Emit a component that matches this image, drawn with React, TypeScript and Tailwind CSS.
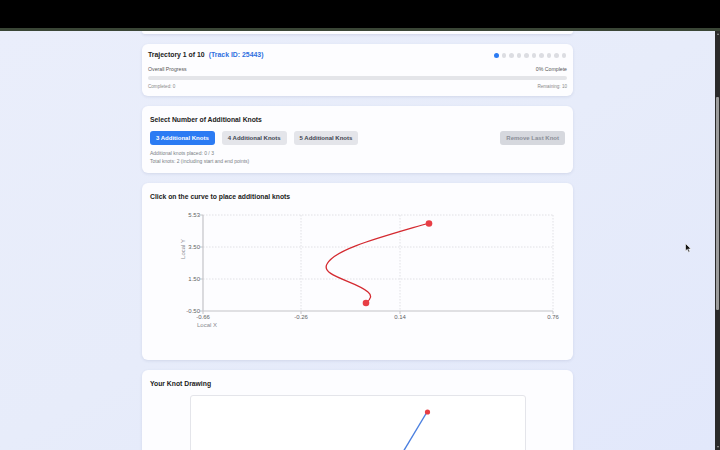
import React from 'react'

// Knot placement page — trajectory review step

const font = { fontFamily: '"Liberation Sans", Arial, sans-serif' }

function ProgressCard() {
  return (
    <div className="rounded-md bg-[#fdfdff] px-[6px] pt-[6px] pb-[6px] shadow-[0_1px_3px_rgba(60,70,120,0.12)]">
      <div className="flex h-[11px] items-center justify-between">
        <div className="flex items-center gap-[4px] text-[6.9px] font-bold leading-none">
          <span className="text-[#222]">Trajectory 1 of 10</span>
          <span className="text-[#2f6fe0]">(Track ID: 25443)</span>
        </div>
        <div className="mr-[1px] flex items-center gap-[3px]">
          {Array.from({ length: 10 }).map((_, i) => (
            <div
              key={i}
              className={i === 0 ? 'h-[5px] w-[5px] rounded-full bg-[#2b7bf3]' : 'h-[4.5px] w-[4.5px] rounded-full bg-[#dcdde2]'}
            />
          ))}
        </div>
      </div>
      <div className="mt-[4px] flex justify-between text-[5.2px] leading-[8px] text-[#555]">
        <span>Overall Progress</span>
        <span>0% Complete</span>
      </div>
      <div className="mt-[3px] h-[4px] rounded-full bg-[#e4e5e9]" />
      <div className="mt-[3px] flex justify-between text-[4.6px] leading-[7px] text-[#888]">
        <span>Completed: 0</span>
        <span>Remaining: 10</span>
      </div>
    </div>
  )
}

function KnotSelectCard() {
  const btn = 'h-[14px] rounded-[3px] px-[6px] text-[6px] font-bold leading-none flex items-center'
  return (
    <div className="rounded-md bg-[#fdfdff] px-[8px] pt-[9px] pb-[8px] shadow-[0_1px_3px_rgba(60,70,120,0.12)]">
      <div className="text-[6.8px] font-bold leading-[9px] text-[#222]">Select Number of Additional Knots</div>
      <div className="mt-[7px] flex items-center">
        <div className="flex gap-[7px]">
          <button className={btn + ' bg-[#2b7bf3] text-white'}>3 Additional Knots</button>
          <button className={btn + ' bg-[#e4e5ea] text-[#3d4350]'}>4 Additional Knots</button>
          <button className={btn + ' bg-[#e4e5ea] text-[#3d4350]'}>5 Additional Knots</button>
        </div>
        <button className={btn + ' ml-auto bg-[#d6d8de] text-[#8a8e98]'}>Remove Last Knot</button>
      </div>
      <div className="mt-[4px] text-[5px] leading-[8px] text-[#7a7d85]">
        <div>Additional knots placed: 0 / 3</div>
        <div>Total knots: 2 (including start and end points)</div>
      </div>
    </div>
  )
}

function CurveChart() {
  // plot area in svg coords: x 53..403, y 9..105
  const xs = [53, 151, 250, 403]
  const xl = ['-0.66', '-0.26', '0.14', '0.76']
  const ys = [9, 41, 73, 105]
  const yl = ['5.53', '3.50', '1.50', '-0.50']
  return (
    <svg width="415" height="140" viewBox="0 0 415 140" className="block">
      {xs.slice(1).map((x) => (
        <line key={x} x1={x} y1={9} x2={x} y2={105} stroke="#d9d9de" strokeWidth="0.8" strokeDasharray="1.5 1.5" />
      ))}
      {ys.slice(0, 3).map((y) => (
        <line key={y} x1={53} y1={y} x2={403} y2={y} stroke="#d9d9de" strokeWidth="0.8" strokeDasharray="1.5 1.5" />
      ))}
      <line x1={53} y1={9} x2={53} y2={105} stroke="#c4c4c8" strokeWidth="1.2" />
      <line x1={53} y1={105} x2={403} y2={105} stroke="#c4c4c8" strokeWidth="1.2" />
      {ys.map((y) => (
        <line key={'t' + y} x1={50} y1={y} x2={53} y2={y} stroke="#c4c4c8" strokeWidth="1" />
      ))}
      {xs.map((x) => (
        <line key={'u' + x} x1={x} y1={105} x2={x} y2={108} stroke="#c4c4c8" strokeWidth="1" />
      ))}
      {yl.map((t, i) => (
        <text key={t} x={50} y={ys[i] + 2} textAnchor="end" fontSize="6" fill="#5f5f64" style={font}>
          {t}
        </text>
      ))}
      {xl.map((t, i) => (
        <text key={t} x={xs[i]} y={112.5} textAnchor="middle" fontSize="6" fill="#5f5f64" style={font}>
          {t}
        </text>
      ))}
      <text x={57} y={121} textAnchor="middle" fontSize="6" fill="#8a8a90" style={font}>
        Local X
      </text>
      <text x={35} y={43} textAnchor="middle" fontSize="6" fill="#8a8a90" transform="rotate(-90 35 43)" style={font}>
        Local Y
      </text>
      <path
        d="M216,97 Q224,91 218,86 C206,75 170,70 177,58 C185,43 228,32 279,17"
        fill="none"
        stroke="#d42a30"
        strokeWidth="1.3"
      />
      <circle cx={216} cy={97} r={3.3} fill="#e83e45" />
      <circle cx={279} cy={17.5} r={3.3} fill="#e83e45" />
    </svg>
  )
}

export default function App() {
  return (
    <div className="relative flex h-[450px] w-[720px] flex-col overflow-hidden bg-black" style={font}>
      <div className="h-[28px] bg-black" />
      <div className="h-[3px] bg-[#3a4636]" />
      <div className="flex flex-1 overflow-hidden">
        <main className="flex-1 overflow-hidden bg-gradient-to-br from-[#eaeefb] via-[#e7ecfa] to-[#e2e8fb]">
          <div className="mx-auto flex w-[431px] flex-col gap-[10px]">
            <div className="h-[3px] rounded-b-md bg-[#fdfdff] shadow-[0_1px_3px_rgba(60,70,120,0.15)]" />
            <ProgressCard />
            <KnotSelectCard />
            <div className="h-[177px] rounded-md bg-[#fdfdff] px-[8px] pt-[9px] shadow-[0_1px_3px_rgba(60,70,120,0.12)]">
              <div className="text-[6.8px] font-bold leading-[9px] text-[#222]">Click on the curve to place additional knots</div>
              <div className="mt-[5px]">
                <CurveChart />
              </div>
            </div>
            <div className="h-[120px] rounded-md bg-[#fdfdff] px-[8px] pt-[9px] shadow-[0_1px_3px_rgba(60,70,120,0.12)]">
              <div className="text-[6.8px] font-bold leading-[9px] text-[#222]">Your Knot Drawing</div>
              <div className="mx-auto mt-[7px] h-[100px] w-[336px] rounded-[3px] border border-[#e4e5ea] bg-white">
                <svg width="336" height="100" viewBox="0 0 336 100" className="block">
                  <line x1={236} y1={16} x2={212} y2={56} stroke="#4a7fe0" strokeWidth="1.4" />
                  <circle cx={236.5} cy={16} r={2.6} fill="#e83e45" />
                </svg>
              </div>
            </div>
          </div>
        </main>
        <div className="flex w-[5px] flex-col bg-[#2a2a2a]">
          <div className="mx-auto mt-[2px] h-0 w-0 border-x-[1.5px] border-b-[2px] border-x-transparent border-b-[#9a9a9a]" />
          <div className="mx-auto mt-[62px] h-[213px] w-[3px] rounded-[1px] bg-[#9c9c9c]" />
          <div className="mx-auto mt-auto mb-[2px] h-0 w-0 border-x-[1.5px] border-t-[2px] border-x-transparent border-t-[#9a9a9a]" />
        </div>
      </div>
      <svg className="absolute left-[685px] top-[243px]" width="7" height="10" viewBox="0 0 7 10">
        <path d="M0.5,0.5 L0.5,8 L2.3,6.3 L3.6,9.3 L4.8,8.8 L3.6,5.9 L6,5.9 Z" fill="#111" stroke="#fff" strokeWidth="0.6" />
      </svg>
    </div>
  )
}
